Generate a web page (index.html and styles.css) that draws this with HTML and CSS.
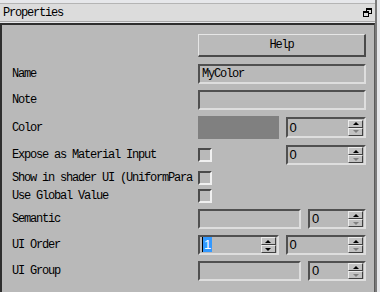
FILE: index.html
```html
<!DOCTYPE html>
<html lang="en">
<head>
  <meta charset="UTF-8">
  <title>Properties</title>
  <link rel="stylesheet" href="styles.css">
</head>
<body>
  <div class="window">
    <div class="titlebar">
      <span>Properties</span>
      <svg class="restore" width="9" height="9" viewBox="0 0 9 9">
        <rect x="3" y="0" width="6" height="2"/>
        <rect x="8" y="2" width="1" height="4"/>
        <rect x="6" y="5" width="3" height="1"/>
        <rect x="3" y="2" width="1" height="1"/>
        <rect x="0" y="3" width="6" height="2"/>
        <rect x="0" y="5" width="1" height="4"/>
        <rect x="5" y="5" width="1" height="4"/>
        <rect x="0" y="8" width="6" height="1"/>
      </svg>
    </div>

    <div class="panel">
      <div class="row row-help">
        <div class="label"></div>
        <div class="btn">Help</div>
      </div>

      <div class="row row-name">
        <div class="label">Name</div>
        <div class="field">MyColor</div>
      </div>

      <div class="row">
        <div class="label">Note</div>
        <div class="field"></div>
      </div>

      <div class="row row-color">
        <div class="label">Color</div>
        <div class="pair">
          <div class="swatch"></div>
          <div class="spin"><span class="val">0</span><span class="arrows"><span class="arr"><i class="up"></i></span><span class="arr"><i class="down off"></i></span></span></div>
        </div>
      </div>

      <div class="row">
        <div class="label">Expose as Material Input</div>
        <div class="pair">
          <div><span class="check"></span></div>
          <div class="spin"><span class="val">0</span><span class="arrows"><span class="arr"><i class="up"></i></span><span class="arr"><i class="down off"></i></span></span></div>
        </div>
      </div>

      <div class="row row-small">
        <div class="label">Show in shader UI (UniformPara</div>
        <div class="ctrl"><span class="check"></span></div>
      </div>

      <div class="row row-small row-global">
        <div class="label">Use Global Value</div>
        <div class="ctrl"><span class="check"></span></div>
      </div>

      <div class="row">
        <div class="label">Semantic</div>
        <div class="pair pair-narrow">
          <div class="field"></div>
          <div class="spin"><span class="val">0</span><span class="arrows"><span class="arr"><i class="up"></i></span><span class="arr"><i class="down off"></i></span></span></div>
        </div>
      </div>

      <div class="row">
        <div class="label">UI Order</div>
        <div class="pair">
          <div class="spin"><span class="val"><span class="sel">1</span></span><span class="arrows"><span class="arr"><i class="up"></i></span><span class="arr"><i class="down"></i></span></span></div>
          <div class="spin"><span class="val">0</span><span class="arrows"><span class="arr"><i class="up"></i></span><span class="arr"><i class="down off"></i></span></span></div>
        </div>
      </div>

      <div class="row">
        <div class="label">UI Group</div>
        <div class="pair pair-narrow">
          <div class="field"></div>
          <div class="spin"><span class="val">0</span><span class="arrows"><span class="arr"><i class="up"></i></span><span class="arr"><i class="down off"></i></span></span></div>
        </div>
      </div>
    </div>
  </div>
</body>
</html>
```

FILE: styles.css
```css
body { margin: 0; background: #e6e7ea; font-family: "Liberation Mono", "DejaVu Sans Mono", monospace; font-size: 12px; letter-spacing: -1.2px; color: #000; }
.window { width: 375px; height: 292px; overflow: hidden; border-right: 2px solid #7a7a7a; }

.titlebar { margin-top: 3px; height: 17px; border-top: 1px solid #b4b4b4; border-bottom: 1px solid #a8a8a8; background: #dcdcdc; display: flex; align-items: center; justify-content: space-between; padding: 0 3px 0 3px; }
.restore { fill: #000; display: block; }

.panel { margin-top: 1px; height: 300px; border-top: 2px solid #2e2e2e; border-left: 2px solid #2e2e2e; border-right: 1px solid #5a5a5a; background: #b9b9b9; padding: 9px 0 0 10px; display: flex; flex-direction: column; }

.row { display: flex; align-items: center; height: 20px; margin-top: 6px; flex: none; }
.row-help { height: 23px; margin-top: 0; }
.row-name { margin-top: 7px; }
.row-color { height: 23px; }
.row-small { height: 14px; }
.row-global { margin-top: 4px; }

.label { width: 183px; margin-right: 3px; white-space: nowrap; flex: none; }
.ctrl, .field, .btn, .pair { width: 168px; flex: none; }

.btn { box-sizing: border-box; height: 23px; border-style: solid; border-width: 1px 2px 2px 1px; border-color: #e6e6e6 #4a4a4a #4a4a4a #e6e6e6; background: #bababa; display: flex; align-items: center; justify-content: center; }

.field { box-sizing: border-box; height: 20px; border: 2px solid; border-color: #505050 #dedede #dedede #505050; padding-left: 2px; line-height: 16px; }
.pair .field { width: auto; }

.pair { display: grid; grid-template-columns: 1fr 1fr; column-gap: 7px; align-items: center; height: 100%; }
.pair-narrow { grid-template-columns: 1fr 58px; }

.swatch { height: 23px; background: #808080; }

.spin { box-sizing: border-box; height: 20px; border: 2px solid; border-color: #505050 #dedede #dedede #505050; display: flex; align-items: center; }
.row-color .spin { height: 21px; }
.val { flex: 1; padding-left: 2px; font-family: "Liberation Sans", Arial, sans-serif; font-size: 13px; letter-spacing: 0; line-height: 16px; }
.arrows { display: flex; flex-direction: column; margin-right: 1px; }
.arr { box-sizing: border-box; width: 15px; height: 8px; border-style: solid; border-width: 1px; border-color: #ececec #404040 #404040 #ececec; background: #c2c2c2; display: flex; align-items: center; justify-content: center; }
.up { width: 0; height: 0; border-left: 3px solid transparent; border-right: 3px solid transparent; border-bottom: 3px solid #000; }
.down { width: 0; height: 0; border-left: 3px solid transparent; border-right: 3px solid transparent; border-top: 3px solid #000; }
.down.off { border-top-color: #808080; }

.sel { background: #3399ff; color: #fff; border-left: 1px solid #000; padding: 0 1px; }

.check { display: block; box-sizing: border-box; width: 14px; height: 14px; border: 2px solid; border-color: #4a4a4a #f0f0f0 #f0f0f0 #4a4a4a; }
```
